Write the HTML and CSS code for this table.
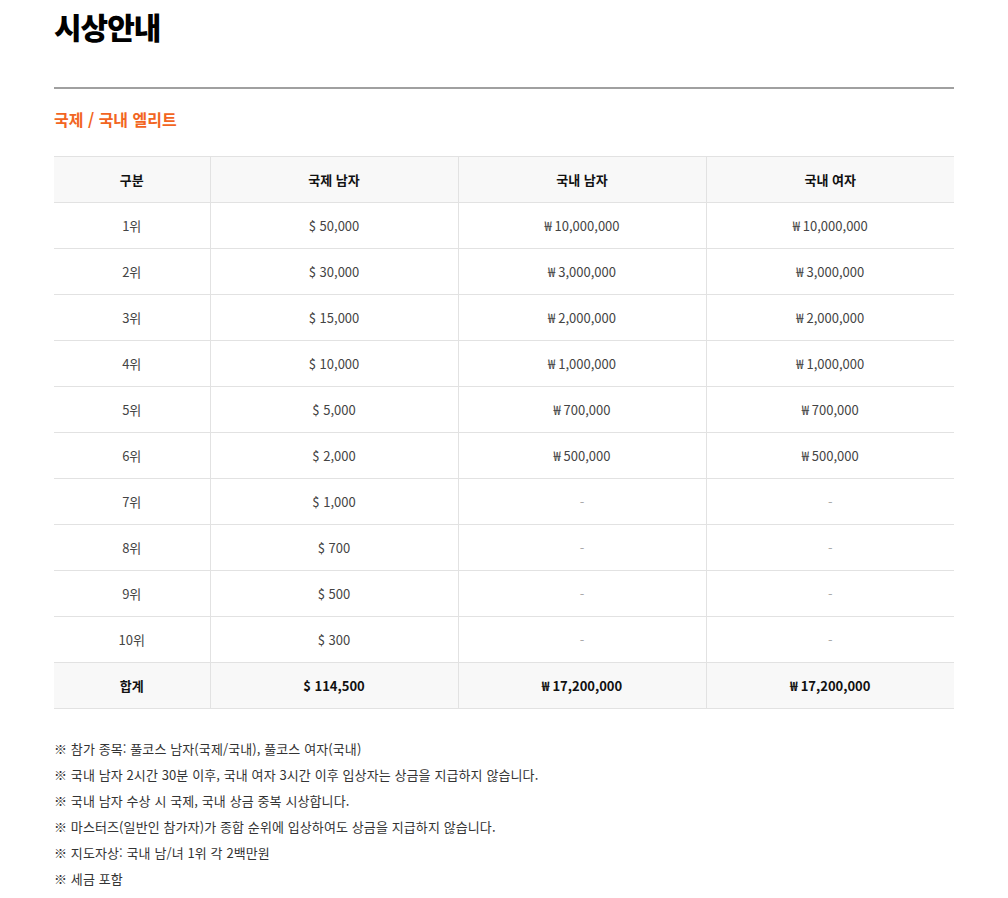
FILE: index.html
```html
<!DOCTYPE html>
<html lang="ko">
<head>
<meta charset="utf-8">
<link rel="stylesheet" href="styles.css">
</head>
<body>
<div class="wrap">
  <h1 class="title">시상안내</h1>
  <hr class="divider">
  <h2 class="subtitle">국제 / 국내 엘리트</h2>
  <table class="prize">
    <colgroup>
      <col class="c1"><col class="c2"><col class="c3"><col class="c4">
    </colgroup>
    <thead>
      <tr><th>구분</th><th>국제 남자</th><th>국내 남자</th><th>국내 여자</th></tr>
    </thead>
    <tbody>
      <tr><td>1위</td><td>$ 50,000</td><td>₩ 10,000,000</td><td>₩ 10,000,000</td></tr>
      <tr><td>2위</td><td>$ 30,000</td><td>₩ 3,000,000</td><td>₩ 3,000,000</td></tr>
      <tr><td>3위</td><td>$ 15,000</td><td>₩ 2,000,000</td><td>₩ 2,000,000</td></tr>
      <tr><td>4위</td><td>$ 10,000</td><td>₩ 1,000,000</td><td>₩ 1,000,000</td></tr>
      <tr><td>5위</td><td>$ 5,000</td><td>₩ 700,000</td><td>₩ 700,000</td></tr>
      <tr><td>6위</td><td>$ 2,000</td><td>₩ 500,000</td><td>₩ 500,000</td></tr>
      <tr><td>7위</td><td>$ 1,000</td><td class="dash">-</td><td class="dash">-</td></tr>
      <tr><td>8위</td><td>$ 700</td><td class="dash">-</td><td class="dash">-</td></tr>
      <tr><td>9위</td><td>$ 500</td><td class="dash">-</td><td class="dash">-</td></tr>
      <tr><td>10위</td><td>$ 300</td><td class="dash">-</td><td class="dash">-</td></tr>
    </tbody>
    <tfoot>
      <tr><th>합계</th><th>$ 114,500</th><th>₩ 17,200,000</th><th>₩ 17,200,000</th></tr>
    </tfoot>
  </table>
  <ul class="notes">
    <li>※ 참가 종목: 풀코스 남자(국제/국내), 풀코스 여자(국내)</li>
    <li>※ 국내 남자 2시간 30분 이후, 국내 여자 3시간 이후 입상자는 상금을 지급하지 않습니다.</li>
    <li>※ 국내 남자 수상 시 국제, 국내 상금 중복 시상합니다.</li>
    <li>※ 마스터즈(일반인 참가자)가 종합 순위에 입상하여도 상금을 지급하지 않습니다.</li>
    <li>※ 지도자상: 국내 남/녀 1위 각 2백만원</li>
    <li>※ 세금 포함</li>
  </ul>
</div>
</body>
</html>
```

FILE: styles.css
```css
* { box-sizing: border-box; }
html, body { margin: 0; padding: 0; background: #fff; }
body {
  font-family: "Noto Sans CJK KR", "Noto Sans", sans-serif;
  color: #333;
}
.wrap {
  width: 900px;
  margin-left: 54px;
}
.title {
  margin: 0;
  font-size: 30px;
  line-height: 52px;
  font-weight: 900;
  color: #000;
  letter-spacing: -1px;
}
.divider {
  margin: 35px 0 0 0;
  border: 0;
  height: 2px;
  background: #a0a0a0;
}
.subtitle {
  margin: 18px 0 0 0;
  font-size: 16px;
  line-height: 24px;
  font-weight: 700;
  color: #f26522;
}
.prize {
  margin-top: 25px;
  width: 900px;
  border-collapse: collapse;
  table-layout: fixed;
  font-size: 13px;
}
.c1 { width: 156px; }
.c2 { width: 248px; }
.c3 { width: 248px; }
.c4 { width: 248px; }
.prize th, .prize td {
  height: 46px;
  padding: 0;
  text-align: center;
  vertical-align: middle;
  border: 1px solid #e2e2e2;
}
.prize tr > :first-child { border-left: 0; }
.prize tr > :last-child { border-right: 0; }
.prize th {
  background: #f8f8f8;
  font-weight: 700;
  color: #111;
}
.prize td { color: #444; }
.prize td.dash { color: #aaa; }
.notes {
  list-style: none;
  margin: 27px 0 0 0;
  padding: 0;
  font-size: 13px;
  line-height: 26px;
  color: #333;
  letter-spacing: 0.1px;
}
```
